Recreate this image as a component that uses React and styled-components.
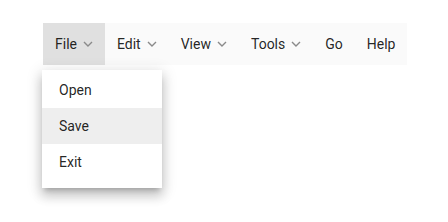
import React from "react";
import styled, { createGlobalStyle } from "styled-components";

const Global = createGlobalStyle`
  html, body, #root {
    height: 100%;
    overflow: visible;
  }
  body {
    margin: 0;
    background: #ffffff;
    font-family: Roboto, "Liberation Sans", sans-serif;
  }
`;

const Page = styled.div`
  min-height: 222px;
  box-sizing: border-box;
  padding: 23px 0 0 43px;
`;

const Bar = styled.nav`
  position: relative;
  z-index: 1;
  display: inline-flex;
  background: #fafafa;
  height: 42px;
`;

const MenuItem = styled.div`
  position: relative;
  display: flex;
  align-items: center;
  gap: 6px;
  padding: 0 12px;
  font-size: 14px;
  color: rgba(0, 0, 0, 0.87);
  background: ${(p) => (p.$active ? "#e0e0e0" : "transparent")};
  cursor: pointer;
`;

const Chevron = styled.svg`
  width: 10px;
  height: 6px;
  stroke: #8a8a8a;
  stroke-width: 1.4;
  fill: none;
`;

const Dropdown = styled.ul`
  position: absolute;
  z-index: 10;
  top: 47px;
  left: -1px;
  width: 120px;
  margin: 0;
  padding: 2px 0 8px;
  list-style: none;
  background: #fff;
  box-shadow: 0 5px 5px -3px rgba(0, 0, 0, 0.2),
    0 8px 10px 1px rgba(0, 0, 0, 0.14), 0 3px 14px 2px rgba(0, 0, 0, 0.12);
`;

const Option = styled.li`
  display: flex;
  align-items: center;
  height: 36px;
  padding: 0 17px;
  font-size: 14px;
  color: rgba(0, 0, 0, 0.87);
  background: ${(p) => (p.$hover ? "#eeeeee" : "transparent")};
`;

const Arrow = () => (
  <Chevron viewBox="0 0 10 6">
    <path d="M1 1l4 4 4-4" />
  </Chevron>
);

const menus = [
  { label: "File", sub: true, active: true },
  { label: "Edit", sub: true },
  { label: "View", sub: true },
  { label: "Tools", sub: true },
  { label: "Go" },
  { label: "Help" },
];

export default function App() {
  return (
    <Page>
      <Global />
      <Bar>
        {menus.map((m) => (
          <MenuItem key={m.label} $active={m.active}>
            {m.label}
            {m.sub && <Arrow />}
            {m.active && (
              <Dropdown>
                <Option>Open</Option>
                <Option $hover>Save</Option>
                <Option>Exit</Option>
              </Dropdown>
            )}
          </MenuItem>
        ))}
      </Bar>
    </Page>
  );
}
